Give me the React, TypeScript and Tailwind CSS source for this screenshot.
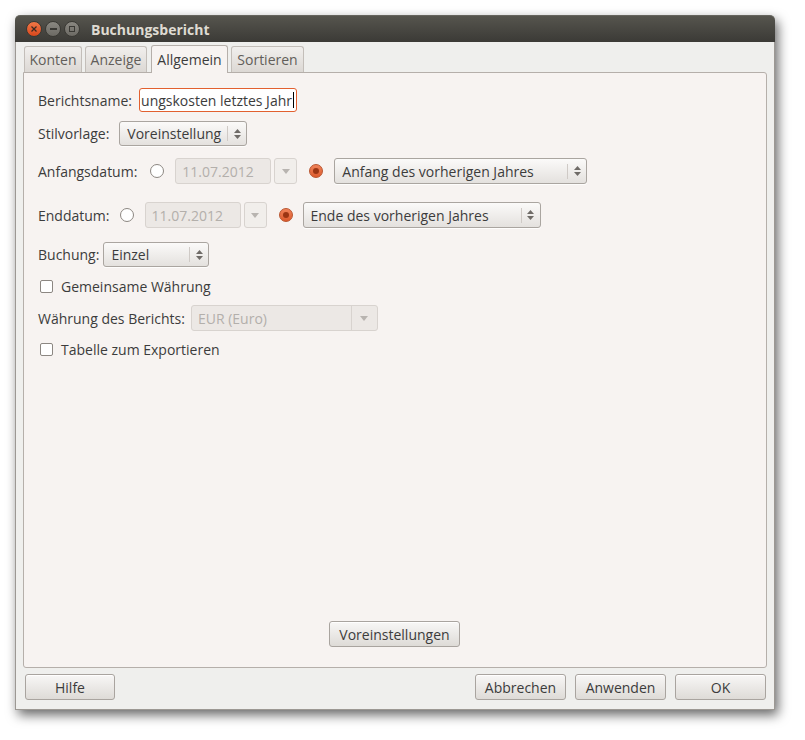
import React from "react";

const F = { fontFamily: '"Open Sans", "Noto Sans", sans-serif' };

function SpinArrows() {
  return (
    <div className="flex flex-col items-center gap-[2px]">
      <svg width="7" height="4" viewBox="0 0 7 4"><path d="M0 4 L3.5 0 L7 4 Z" fill="#6f6b67" /></svg>
      <svg width="7" height="4" viewBox="0 0 7 4"><path d="M0 0 L3.5 4 L7 0 Z" fill="#6f6b67" /></svg>
    </div>
  );
}

function DownArrow({ color = "#b8b4b0" }: { color?: string }) {
  return (
    <svg width="8" height="5" viewBox="0 0 8 5"><path d="M0 0 L4 5 L8 0 Z" fill={color} /></svg>
  );
}

function SpinSelect({ text, w, h = 25 }: { text: string; w: number; h?: number }) {
  return (
    <div
      className="flex items-center rounded-[3px] border border-[#aaa5a0] bg-gradient-to-b from-[#fbfaf9] to-[#e4e1de] shadow-[0_1px_0_rgba(255,255,255,0.8)]"
      style={{ width: w, height: h }}
    >
      <div className="flex-1 pl-[7px] text-[14px] text-[#3c3c3c] whitespace-nowrap overflow-hidden">{text}</div>
      <div className="h-[15px] w-px bg-[#cfcac6]" />
      <div className="w-[18px] flex justify-center">
        <SpinArrows />
      </div>
    </div>
  );
}

function Radio({ checked }: { checked?: boolean }) {
  if (checked) {
    return (
      <div className="w-[14px] h-[14px] rounded-full border border-[#b9542e] bg-gradient-to-b from-[#f0835a] to-[#dd5a2b] flex items-center justify-center">
        <div className="w-[6px] h-[6px] rounded-full bg-[#9b3513]" />
      </div>
    );
  }
  return <div className="w-[14px] h-[14px] rounded-full border border-[#8c8782] bg-white" />;
}

function Checkbox() {
  return <div className="w-[13px] h-[13px] rounded-[2px] border border-[#8c8782] bg-white" />;
}

function DateInput({ w }: { w: number }) {
  return (
    <div className="flex items-center gap-[3px]">
      <div
        className="h-[26px] rounded-[3px] border border-[#d8d3cf] bg-[#ece8e5] flex items-center pl-[6px] text-[14px] text-[#b3afab]"
        style={{ width: w }}
      >
        11.07.2012
      </div>
      <div className="h-[26px] w-[23px] rounded-[3px] border border-[#d8d3cf] bg-[#f1eeeb] flex items-center justify-center">
        <DownArrow />
      </div>
    </div>
  );
}

function Button({ label, w, h = 26 }: { label: string; w: number; h?: number }) {
  return (
    <div
      className="flex items-center justify-center rounded-[3px] border border-[#a9a49f] bg-gradient-to-b from-[#f8f7f6] to-[#dedbd7] text-[14px] text-[#3c3c3c] shadow-[inset_0_1px_0_rgba(255,255,255,0.9)]"
      style={{ width: w, height: h }}
    >
      {label}
    </div>
  );
}

function Tab({ label, active, w, ml }: { label: string; active?: boolean; w: number; ml: number }) {
  if (active) {
    return (
      <div
        className="h-[28px] -mb-px relative z-10 rounded-t-[3px] border border-b-0 border-[#b5afaa] bg-[#f7f3f1] flex items-center justify-center text-[14px] text-[#3c3c3c]"
        style={{ width: w, marginLeft: ml }}
      >
        {label}
      </div>
    );
  }
  return (
    <div
      className="h-[26px] rounded-t-[3px] border border-b-0 border-[#c3beb9] bg-gradient-to-b from-[#f1efed] to-[#dcd8d4] flex items-center justify-center text-[14px] text-[#625e5a]"
      style={{ width: w, marginLeft: ml }}
    >
      {label}
    </div>
  );
}

export default function App() {
  return (
    <div className="w-[805px] h-[740px] bg-white overflow-hidden" style={F}>
      <div className="ml-[15px] mt-[15px] w-[760px] h-[695px] flex flex-col rounded-t-[5px] shadow-[3px_5px_12px_rgba(0,0,0,0.6)]">
        {/* Title bar */}
        <div className="h-[27px] shrink-0 rounded-t-[5px] bg-gradient-to-b from-[#56554e] to-[#3b3a36] border-t border-[#66655e] flex items-center">
          <div className="ml-[11px] flex items-center gap-[3px]">
            <div className="w-[16px] h-[16px] rounded-full bg-gradient-to-b from-[#f07746] to-[#d9471b] border border-[#3a3934] flex items-center justify-center">
              <svg width="6" height="6" viewBox="0 0 6 6"><path d="M0.5 0.5 L5.5 5.5 M5.5 0.5 L0.5 5.5" stroke="#3a2a22" strokeWidth="1.2" /></svg>
            </div>
            <div className="w-[16px] h-[16px] rounded-full bg-gradient-to-b from-[#8a8881] to-[#6c6a64] border border-[#3a3934] flex items-center justify-center">
              <div className="w-[7px] h-[1.5px] bg-[#3a3934]" />
            </div>
            <div className="w-[16px] h-[16px] rounded-full bg-gradient-to-b from-[#8a8881] to-[#6c6a64] border border-[#3a3934] flex items-center justify-center">
              <div className="w-[6px] h-[6px] border border-[#3a3934]" />
            </div>
          </div>
          <div className="ml-[11px] text-[14px] font-bold text-[#dfdbd2]">Buchungsbericht</div>
        </div>

        {/* Body */}
        <div className="flex-1 bg-[#efefed] border-x border-b border-[#9c9893] px-[7px] pt-[3px] pb-[9px] flex flex-col">
          {/* Tabs */}
          <div className="flex items-end h-[27px] shrink-0">
            <Tab label="Konten" w={58} ml={1} />
            <Tab label="Anzeige" w={62} ml={3} />
            <Tab label="Allgemein" w={77} ml={4} active />
            <Tab label="Sortieren" w={73} ml={3} />
          </div>

          {/* Panel */}
          <div className="flex-1 rounded-b-[3px] rounded-tr-[3px] border border-[#b5afaa] bg-[#f7f3f1] pl-[14px] pt-[15px] flex flex-col text-[14px] text-[#3c3c3c]">
            {/* Berichtsname */}
            <div className="flex items-center h-[24px]">
              <span>Berichtsname:</span>
              <div className="ml-[7px] w-[158px] h-[24px] rounded-[3px] border border-[#e2602f] bg-white flex items-center justify-end overflow-hidden whitespace-nowrap pr-[2px]">
                <span className="text-[#3c3c3c]">ungskosten letztes Jahr</span>
                <div className="w-px h-[16px] bg-black ml-px shrink-0" />
              </div>
            </div>

            {/* Stilvorlage */}
            <div className="flex items-center mt-[9px]">
              <span>Stilvorlage:</span>
              <div className="ml-[10px]">
                <SpinSelect text="Voreinstellung" w={128} />
              </div>
            </div>

            {/* Anfangsdatum */}
            <div className="flex items-center mt-[12px] h-[26px]">
              <span>Anfangsdatum:</span>
              <div className="ml-[13px]"><Radio /></div>
              <div className="ml-[11px]"><DateInput w={96} /></div>
              <div className="ml-[12px]"><Radio checked /></div>
              <div className="ml-[11px]"><SpinSelect text="Anfang des vorherigen Jahres" w={253} h={26} /></div>
            </div>

            {/* Enddatum */}
            <div className="flex items-center mt-[18px] h-[26px]">
              <span>Enddatum:</span>
              <div className="ml-[10px]"><Radio /></div>
              <div className="ml-[11px]"><DateInput w={96} /></div>
              <div className="ml-[12px]"><Radio checked /></div>
              <div className="ml-[10px]"><SpinSelect text="Ende des vorherigen Jahres" w={238} h={26} /></div>
            </div>

            {/* Buchung */}
            <div className="flex items-center mt-[14px]">
              <span>Buchung:</span>
              <div className="ml-[4px]"><SpinSelect text="Einzel" w={106} /></div>
            </div>

            {/* Gemeinsame Währung */}
            <div className="flex items-center mt-[9px] h-[20px] pl-[2px]">
              <Checkbox />
              <span className="ml-[8px]">Gemeinsame Währung</span>
            </div>

            {/* Währung des Berichts */}
            <div className="flex items-center mt-[9px] h-[26px]">
              <span>Währung des Berichts:</span>
              <div className="ml-[6px] w-[187px] h-[26px] rounded-[3px] border border-[#d8d3cf] bg-[#ece8e5] flex items-center">
                <span className="flex-1 pl-[6px] text-[#b3afab]">EUR (Euro)</span>
                <div className="w-px h-[24px] bg-[#d8d3cf]" />
                <div className="w-[25px] flex justify-center"><DownArrow /></div>
              </div>
            </div>

            {/* Tabelle */}
            <div className="flex items-center mt-[8px] h-[20px] pl-[2px]">
              <Checkbox />
              <span className="ml-[8px]">Tabelle zum Exportieren</span>
            </div>

            <div className="flex-1" />

            <div className="flex justify-center pr-[14px] pb-[20px]">
              <div className="ml-[-1px]">
                <Button label="Voreinstellungen" w={131} />
              </div>
            </div>
          </div>

          {/* Bottom buttons */}
          <div className="flex items-center mt-[6px] pl-[2px]">
            <Button label="Hilfe" w={90} />
            <div className="flex-1" />
            <div className="flex gap-[9px] pr-[1px]">
              <Button label="Abbrechen" w={91} />
              <Button label="Anwenden" w={91} />
              <Button label="OK" w={91} />
            </div>
          </div>
        </div>
      </div>
    </div>
  );
}
